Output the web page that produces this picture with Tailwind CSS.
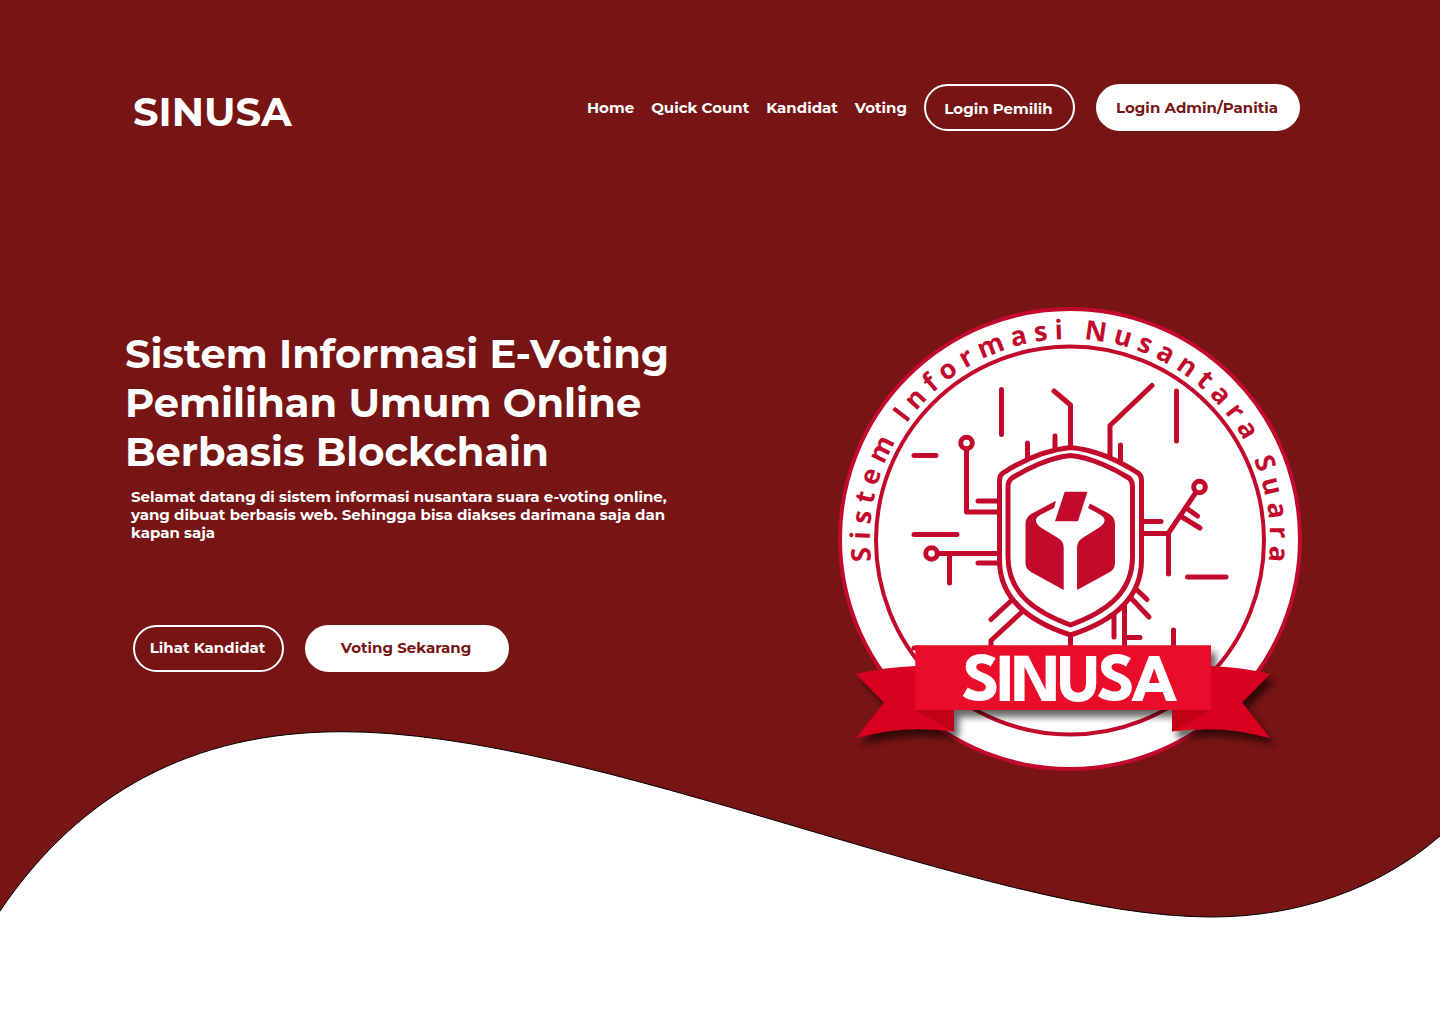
<!DOCTYPE html>
<html lang="id">
<head>
<meta charset="utf-8">
<meta name="viewport" content="width=device-width, initial-scale=1">
<title>SINUSA</title>
<script src="https://cdn.jsdelivr.net/npm/@tailwindcss/browser@4"></script>
</head>
<body class="bg-white">
<div class="relative isolate min-h-screen bg-[#771414] font-[Montserrat,Inter,sans-serif] font-bold text-white">
  <!-- Wave at the foot of the hero -->
  <svg class="absolute inset-0 -z-10 h-full w-full" viewBox="0 0 1440 1024" preserveAspectRatio="none" aria-hidden="true">
    <path d="M-2 914L0 911C80 793 192 731.7 342 731.7C599 731.7 986 917 1211 917C1300 917 1380 888 1440 836L1442 834V1026H-2Z" fill="#fff" stroke="#000" stroke-width="1"/>
  </svg>

  <header class="flex h-[131px] items-start justify-between pt-[84px] pr-[140px] pl-[133px]">
    <a href="#" class="pt-1 text-[40px] leading-[48px]">SINUSA</a>
    <nav class="flex items-center text-[15px] leading-[18px]" aria-label="Utama">
      <ul class="flex items-center gap-[17px] pr-[17px]">
        <li><a href="#">Home</a></li>
        <li><a href="#">Quick Count</a></li>
        <li><a href="#">Kandidat</a></li>
        <li><a href="#">Voting</a></li>
      </ul>
      <div class="flex gap-[21px]">
        <button type="button" class="h-[47px] w-[151px] rounded-full border-2 border-white pt-[2px] pr-[2px]">Login Pemilih</button>
        <button type="button" class="h-[47px] w-[204px] rounded-full bg-white pr-[2px] text-[#771414]">Login Admin/Panitia</button>
      </div>
    </nav>
  </header>

  <main class="flex items-start justify-between pt-[176px] pr-[138px] pl-[125px]">
    <section class="pt-[22px]">
      <h1 class="text-[40px] leading-[49px]">Sistem Informasi E-Voting<br>Pemilihan Umum Online<br>Berbasis Blockchain</h1>
      <p class="pt-[12px] pl-[6px] text-[15px] leading-[18px]">Selamat datang di sistem informasi nusantara suara e-voting online,<br>yang dibuat berbasis web. Sehingga bisa diakses darimana saja dan<br>kapan saja</p>
      <div class="flex gap-[21px] pt-[83px] pl-2 text-[15px] leading-[18px]">
        <button type="button" class="h-[47px] w-[151px] rounded-full border-2 border-white pr-[2px] pb-[2px]">Lihat Kandidat</button>
        <button type="button" class="h-[47px] w-[204px] rounded-full bg-white pr-[2px] pb-[2px] text-[#771414]">Voting Sekarang</button>
      </div>
    </section>

    <svg class="w-[464px] shrink-0 overflow-visible" viewBox="838 307 464 464" role="img" aria-label="Logo SINUSA">
      <defs>
        <path id="ringtext" d="M872.5 570.5A200 200 0 1 1 1267.5 570.5"/>
        <filter id="shadow" x="-10%" y="-20%" width="120%" height="150%">
          <feDropShadow dx="5" dy="7" stdDeviation="3.5" flood-color="#000" flood-opacity=".6"/>
        </filter>
      </defs>
      <circle cx="1070" cy="539" r="230" fill="#fff" stroke="#c20a2d" stroke-width="4"/>
      <circle cx="1070" cy="540.5" r="194" fill="none" stroke="#c20a2d" stroke-width="4"/>
      <text class="font-['Open_Sans',sans-serif] text-[27px] font-bold tracking-[0.25em]" fill="#c20a2d" text-anchor="middle"><textPath href="#ringtext" startOffset="50.5%">Sistem Informasi Nusantara Suara</textPath></text>

      <!-- Circuit traces -->
      <g fill="none" stroke="#c20a2d" stroke-width="5" stroke-linecap="round" stroke-linejoin="round">
        <path d="M1001.5 389.500V434.500M1054 391L1070.500 405V447M914 455.500H936M966.500 450V512H999M978 501H999M1027.500 443V458M1055 436V448M914 534.500H957"/>
        <path d="M1152 385.500L1110 425.500V455M1120.500 445V460M1176.500 391V441M1195.500 493L1168.500 533V574M1142 533.500H1168M1142 521.500H1161M1187 508.500L1197.500 516M1182 517L1200 528"/>
        <path d="M938 553.500H999M949.500 556V583M978 563H999M991 619.500L1012 600M1023 611L991 640.500V650M1070.500 635V650M914 648H920"/>
        <path d="M1187.500 577H1226M1136 589L1147 599.500M1131 598L1149 617M1114 612V637M1124.500 604V650M1125 637.500H1140M1173.500 630V650"/>
        <circle cx="966.500" cy="443" r="5.800"/>
        <circle cx="1199.500" cy="487" r="5.800"/>
        <circle cx="931.500" cy="553.500" r="5.800"/>
        <path fill="#fff" d="M1070.500 447.500C1045 450 1020 462 1003 473Q999.500 475.500 999.500 480V560C999.500 600 1030 622 1070.500 635C1111 622 1141.500 600 1141.500 560V480Q1141.500 475.500 1138 473C1121 462 1096 450 1070.500 447.500Z"/>
        <path d="M1070.500 455.500C1050 457 1025 470 1012 478Q1008 481 1008 487V557C1008 595 1038 613 1070.500 625C1103 613 1132.500 595 1132.500 557V487Q1132.500 481 1129 478C1116 470 1091 457 1070.500 455.500Z"/>
      </g>

      <!-- Ballot box -->
      <g fill="#c20a2d">
        <path d="M1064.700 491.700H1087.500L1078 521.200H1055Z"/>
        <path d="M1056 500.700L1031 514Q1025.500 517.500 1025.500 524V563Q1025.500 569 1031 572L1063.700 590V547Q1063.500 541 1058 538L1040 527Q1035.500 523 1036 519.500Q1037 516.500 1041 514.500L1054 508Z"/>
        <path d="M1090 503.500L1109.500 514Q1115 517.500 1115 524V563Q1115 569 1110 572L1077 590V547Q1077.500 541 1082.500 538L1100 527Q1105 523 1104.500 519.500Q1103.500 516.500 1100 514.500L1088 508Z"/>
      </g>

      <!-- Ribbon -->
      <g filter="url(#shadow)">
        <path fill="#d90421" d="M856 674Q885 667 916 666H954V731.500Q905 724 856 738L884 702.500Z"/>
        <path fill="#d90421" d="M1270 674Q1241 667 1210 666H1172V731.500Q1221 724 1270 738L1242 702.500Z"/>
        <path fill="#c20017" d="M915 710H954V731.500ZM1211 710H1172V731.500Z"/>
        <path fill="#e90f29" d="M915.300 645.300H1211V710H915.300Z"/>
      </g>
      <text x="1068" y="701" class="font-['League_Spartan',Lato,sans-serif] text-[68px] font-bold tracking-tighter" fill="#fff" text-anchor="middle">SINUSA</text>
    </svg>
  </main>
</div>
</body>
</html>
